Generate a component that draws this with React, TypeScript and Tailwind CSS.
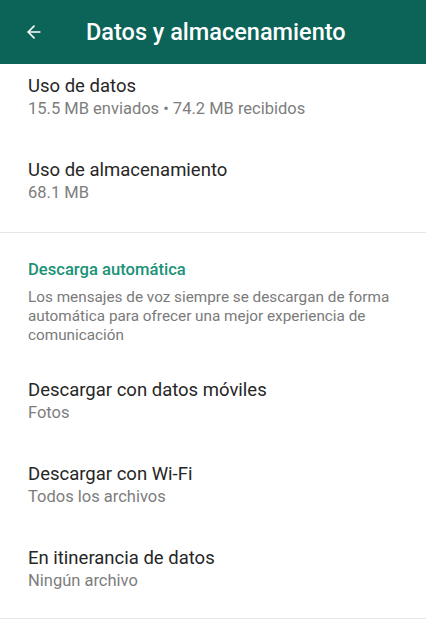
import { ArrowLeft } from "lucide-react"

const font = { fontFamily: "Roboto, 'Noto Sans', sans-serif" }

function Row({ title, sub }: { title: string; sub: string }) {
  return (
    <div className="px-7 py-[19px]">
      <p className="text-[18.5px] leading-[24px] text-[#262626]">{title}</p>
      <p className="text-[16.5px] leading-[22px] text-[#7d7d7d]">{sub}</p>
    </div>
  )
}

export default function App() {
  return (
    <div className="h-[620px] w-[426px] overflow-hidden bg-white" style={font}>
      <header className="relative z-10 flex h-[64px] items-center bg-[#0b6457] pl-6 text-white">
        <ArrowLeft className="size-[20px]" strokeWidth={2} />
        <h1 className="ml-[42px] text-[23.5px] font-medium leading-[30px]">Datos y almacenamiento</h1>
      </header>

      <div className="-mt-[9px]">
        <Row title="Uso de datos" sub="15.5 MB enviados • 74.2 MB recibidos" />
        <Row title="Uso de almacenamiento" sub="68.1 MB" />
      </div>

      <div className="mt-[9px] border-t border-[#e6e6e6]" />

      <div className="px-7 pt-[27px] pb-[14px]">
        <p className="text-[16.6px] font-medium leading-[20px] text-[#1a9277]">Descarga automática</p>
        <p className="mt-[8px] text-[15.3px] leading-[19px] text-[#7a7a7a]">
          Los mensajes de voz siempre se descargan de forma automática para ofrecer una mejor experiencia de comunicación
        </p>
      </div>

      <Row title="Descargar con datos móviles" sub="Fotos" />
      <Row title="Descargar con Wi-Fi" sub="Todos los archivos" />
      <Row title="En itinerancia de datos" sub="Ningún archivo" />

      <div className="mt-[7px] border-t border-[#e6e6e6]" />
    </div>
  )
}
